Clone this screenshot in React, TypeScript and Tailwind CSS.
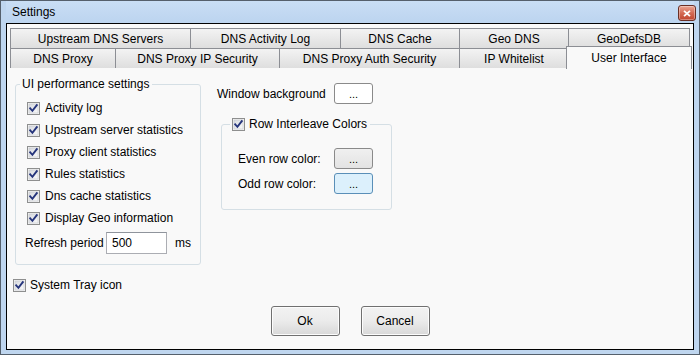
import React from "react";

const FONT = { fontFamily: '"Segoe UI", "Liberation Sans", Arial, sans-serif' };

function Check({ className = "" }: { className?: string }) {
  return (
    <svg width="13" height="13" viewBox="0 0 13 13" className={"shrink-0 " + className}>
      <defs>
        <linearGradient id="cbg" x1="0" y1="0" x2="1" y2="1">
          <stop offset="0" stopColor="#d6d9de" />
          <stop offset="1" stopColor="#fbfbfb" />
        </linearGradient>
      </defs>
      <rect x="0.5" y="0.5" width="12" height="12" fill="#f4f4f4" stroke="#8e8f8f" />
      <rect x="2" y="2" width="9" height="9" fill="url(#cbg)" stroke="#c3c6cb" strokeWidth="0.6" />
      <path d="M3.2 6.4 L5.4 8.8 L9.8 3.2" fill="none" stroke="#26357c" strokeWidth="1.9" strokeLinecap="square" />
    </svg>
  );
}

function CheckRow({ label }: { label: string }) {
  return (
    <div className="flex h-[22px] items-center">
      <Check />
      <span className="ml-[5px] text-[12px] text-black">{label}</span>
    </div>
  );
}

function DotButton({ variant }: { variant: "white" | "gray" | "blue" }) {
  const cls =
    variant === "white"
      ? "bg-white border-[#8a8a8a]"
      : variant === "gray"
      ? "bg-gradient-to-b from-[#f0f0f0] to-[#e3e3e3] border-[#8a8a8a]"
      : "bg-[#dcf0fc] border-[#5a8fb8]";
  return (
    <div
      className={
        "flex h-[21px] w-[39px] items-end justify-center rounded-[3px] border pb-[3px] text-[11px] leading-none text-black " +
        cls
      }
    >
      ...
    </div>
  );
}

function Tab({ w, label, last }: { w: number; label: string; last?: boolean }) {
  return (
    <div
      style={{ width: w }}
      className={
        "flex h-full shrink-0 items-center justify-center border-l border-t border-[#8c8e94] bg-gradient-to-b from-[#f3f3f3] to-[#dedede] text-[12px] text-black " +
        (last ? "border-r" : "")
      }
    >
      {label}
    </div>
  );
}

function PushButton({ label }: { label: string }) {
  return (
    <div className="flex h-[30px] w-[69px] items-center justify-center rounded-[3px] border border-[#707070] bg-gradient-to-b from-[#f2f2f2] via-[#ebebeb] to-[#d8d8d8] text-[12px] text-black shadow-[inset_0_0_0_1px_#fcfcfc]">
      {label}
    </div>
  );
}

export default function App() {
  return (
    <div style={FONT} className="h-[355px] w-[700px] overflow-hidden">
      <div className="flex h-[355px] w-[700px] flex-col border border-[#55606c] bg-[#bfd6ef] px-[5px] pb-[4px]">
        {/* title bar */}
        <div className="flex h-[22px] shrink-0 items-center justify-between bg-gradient-to-b from-[#c9def5] to-[#bcd4ef] pl-[6px]">
          <span className="text-[12px] text-black">Settings</span>
          <div className="mr-[-2px] mt-[2px] flex h-[16px] w-[18px] items-center justify-center rounded-[3px] border border-[#6a2f25] bg-gradient-to-b from-[#e9a593] via-[#d46b55] to-[#c0442d] shadow-[inset_0_0_0_1px_rgba(255,255,255,0.35)]">
            <svg width="8" height="7" viewBox="0 0 8 7">
              <path d="M1 0.8 L7 6.2 M7 0.8 L1 6.2" stroke="#ffffff" strokeWidth="1.8" />
            </svg>
          </div>
        </div>
        {/* client */}
        <div className="flex flex-1 flex-col border border-black bg-[#f9f9f9]">
          {/* tabs */}
          <div className="ml-[3px] mt-[4px] flex h-[20px]">
            <Tab w={180} label="Upstream DNS Servers" />
            <Tab w={150} label="DNS Activity Log" />
            <Tab w={119} label="DNS Cache" />
            <Tab w={109} label="Geo DNS" />
            <Tab w={122} label="GeoDefsDB" last />
          </div>
          <div className="ml-[3px] flex h-[20px]">
            <Tab w={105} label="DNS Proxy" />
            <Tab w={164} label="DNS Proxy IP Security" />
            <Tab w={180} label="DNS Proxy Auth Security" />
            <Tab w={109} label="IP Whitelist" />
            <div className="relative z-10 ml-[-2px] mt-[-2px] flex h-[23px] w-[126px] items-start justify-center border-l border-r border-t border-[#8c8e94] bg-[#f9f9f9] pt-[2px] text-[12px] text-black">
              User Interface
            </div>
          </div>
          {/* panel */}
          <div className="flex flex-1 flex-col">
            <div className="flex">
              {/* left column */}
              <div className="ml-[8px] mt-[8px] flex w-[186px] flex-col">
                <fieldset className="m-0 rounded-[3px] border border-[#d5dfe5] p-0">
                  <legend className="ml-[4px] px-[2px] pr-[3px] text-[12px] leading-[16px] text-black">
                    UI performance settings
                  </legend>
                  <div className="flex flex-col pb-[10px] pl-[11px] pt-[5px]">
                    <CheckRow label="Activity log" />
                    <CheckRow label="Upstream server statistics" />
                    <CheckRow label="Proxy client statistics" />
                    <CheckRow label="Rules statistics" />
                    <CheckRow label="Dns cache statistics" />
                    <CheckRow label="Display Geo information" />
                    <div className="ml-[-2px] mt-[2px] flex h-[23px] items-center">
                      <span className="w-[81px] text-[12px] text-black">Refresh period</span>
                      <div className="flex h-[22px] w-[61px] items-center border border-[#abadb3] border-t-[#8f949c] bg-white pl-[5px] text-[12px] text-black">
                        500
                      </div>
                      <span className="ml-[8px] text-[12px] text-black">ms</span>
                    </div>
                  </div>
                </fieldset>
                <div className="ml-[-2px] mt-[9px] flex h-[22px] items-center">
                  <Check />
                  <span className="ml-[4px] text-[12px] text-black">System Tray icon</span>
                </div>
              </div>
              {/* right column */}
              <div className="ml-[16px] mt-[15px] flex flex-col">
                <div className="flex h-[21px] items-center">
                  <span className="w-[117px] text-[12px] text-black">Window background</span>
                  <DotButton variant="white" />
                </div>
                <fieldset className="m-0 ml-[4px] mt-[12px] w-[171px] rounded-[3px] border border-[#d5dfe5] p-0">
                  <legend className="ml-[8px] flex items-center px-[2px] pr-[3px] text-[12px] leading-[16px] text-black">
                    <Check />
                    <span className="ml-[4px]">Row Interleave Colors</span>
                  </legend>
                  <div className="flex flex-col gap-[4px] pb-[15px] pl-[16px] pt-[16px]">
                    <div className="flex h-[21px] items-center">
                      <span className="w-[96px] text-[12px] text-black">Even row color:</span>
                      <DotButton variant="gray" />
                    </div>
                    <div className="flex h-[21px] items-center">
                      <span className="w-[96px] text-[12px] text-black">Odd row color:</span>
                      <DotButton variant="blue" />
                    </div>
                  </div>
                </fieldset>
              </div>
            </div>
            {/* buttons */}
            <div className="mt-[10px] flex justify-center gap-[21px]">
              <PushButton label="Ok" />
              <PushButton label="Cancel" />
            </div>
          </div>
        </div>
      </div>
    </div>
  );
}
